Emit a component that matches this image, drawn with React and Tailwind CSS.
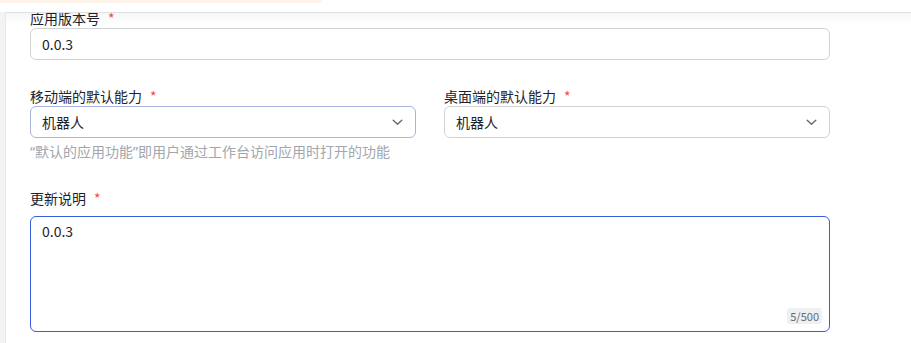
import React from 'react';

const font = { fontFamily: '"Noto Sans CJK SC", "Noto Sans", sans-serif' };
const latin = { fontFamily: '"Noto Sans", sans-serif' };

const Label = ({ children, className = '' }) => (
  <div className={`text-[14px] leading-[20px] text-[#1f2329] ${className}`}>
    {children}
    <span className="ml-[8px] text-[#f54a45]">*</span>
  </div>
);

const Chevron = () => (
  <svg width="11" height="7" viewBox="0 0 11 7" fill="none">
    <path d="M1.2 1.2l4.3 4.1 4.3-4.1" stroke="#646a73" strokeWidth="1.4" strokeLinecap="round" strokeLinejoin="round" />
  </svg>
);

const Select = ({ value, border }) => (
  <div className={`flex h-[32px] w-[386px] items-center justify-between rounded-[6px] border ${border} bg-white pl-[11px] pr-[12px]`}>
    <span className="text-[14px] text-[#1f2329]">{value}</span>
    <Chevron />
  </div>
);

export default function App() {
  return (
    <div className="flex h-[343px] w-[911px] flex-col overflow-hidden bg-white" style={font}>
      <div className="h-[12px] shrink-0 bg-white">
        <div className="h-[3px] w-[322px] rounded-br-[8px] bg-[#fef3e8]" />
      </div>

      <div className="flex min-h-0 flex-1">
        <div className="w-[6px] shrink-0 border-r border-[#e8e9eb] bg-[#f2f3f5]" />
        <div className="relative flex-1 overflow-hidden border-t border-[#dfe1e4]">
          <div className="pointer-events-none absolute inset-x-0 top-0 h-[12px] bg-gradient-to-b from-black/[0.035] to-transparent" />

          <div className="-mt-[6px] w-[800px] pl-[24px] box-content">
            <Label className="pt-[1px]">应用版本号</Label>
            <div className="flex h-[32px] items-center rounded-[6px] border border-[#d0d3d6] px-[11px] text-[14px] text-[#1f2329]">
              0.0.3
            </div>

            <div className="mt-[26px] flex gap-[28px]">
              <div className="flex flex-col">
                <Label>移动端的默认能力</Label>
                <Select value="机器人" border="border-[#aab3e0]" />
              </div>
              <div className="flex flex-col">
                <Label>桌面端的默认能力</Label>
                <Select value="机器人" border="border-[#d0d3d6]" />
              </div>
            </div>
            <div className="mt-[3px] text-[14px] leading-[20px] text-[#a2a6ad]">
              <span style={latin}>“</span>默认的应用功能<span style={latin}>”</span>即用户通过工作台访问应用时打开的功能
            </div>

            <Label className="mt-[26px] mb-[8px]">更新说明</Label>
            <div className="relative h-[116px] rounded-[6px] border border-[#3a5be3] px-[11px] pt-[3px] text-[14px] leading-[22px] text-[#1f2329]">
              0.0.3
              <span className="absolute bottom-[7px] right-[7px] rounded-[3px] bg-[#eff0f2] px-[3px] text-[11px] leading-[16px] text-[#646a73]">
                5/500
              </span>
            </div>
          </div>
        </div>
      </div>
    </div>
  );
}
